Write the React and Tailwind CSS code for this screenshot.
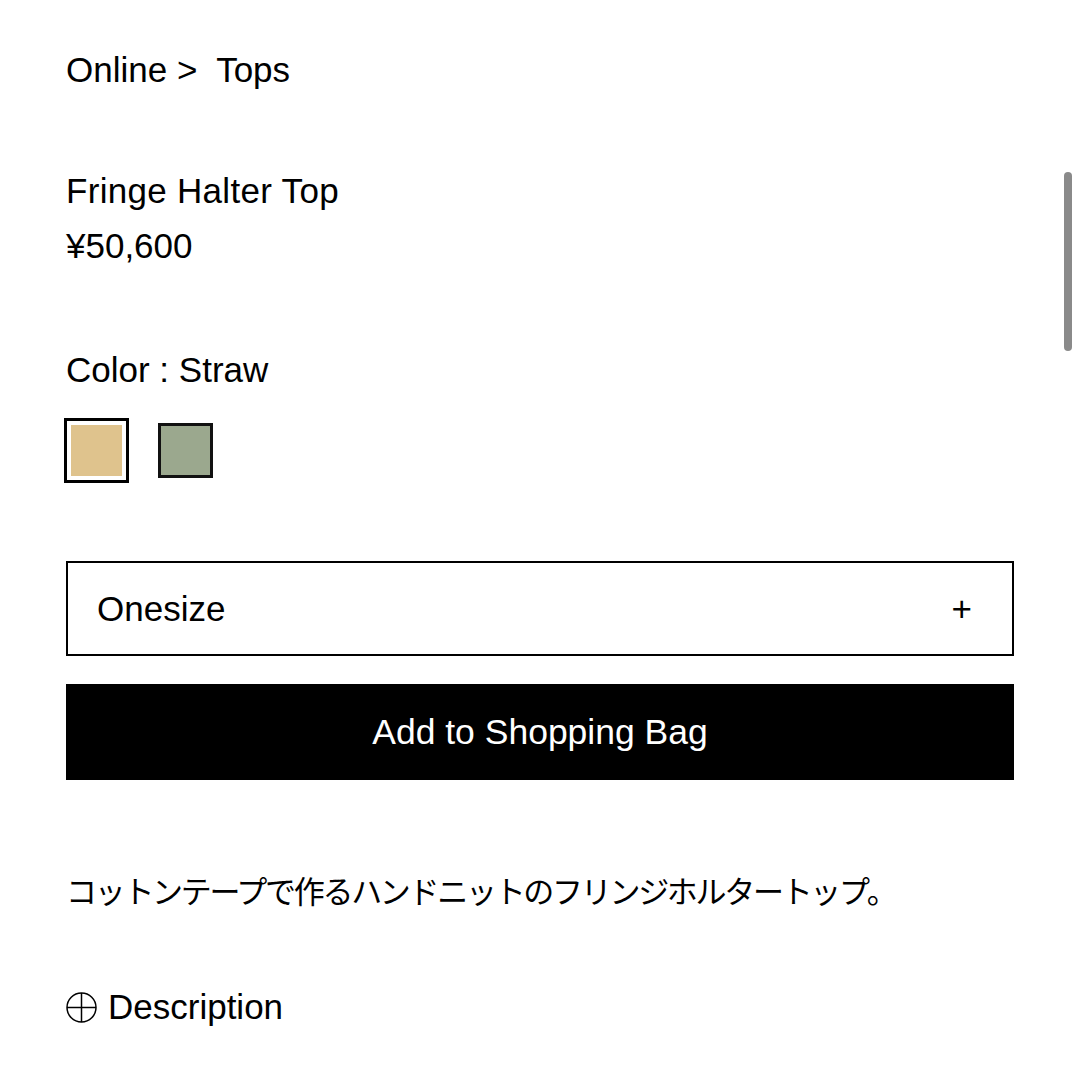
export default function App() {
    const font = { fontFamily: '"Liberation Sans", Arial, "Noto Sans CJK JP", sans-serif' };
    return (
        <div className="relative w-[1080px] h-[1080px] overflow-hidden bg-white text-black" style={font}>
            <div className="px-[66px] pt-[50px]">
                <div className="text-[35px] leading-[40px]">Online &gt;&nbsp; Tops</div>

                <div className="mt-[81px] text-[35px] leading-[40px] tracking-[0.3px]">Fringe Halter Top</div>
                <div className="mt-[15px] text-[35px] leading-[40px]">¥50,600</div>

                <div className="mt-[84px] text-[35px] leading-[40px]">Color : Straw</div>

                <div className="mt-[28px] -ml-[2px] flex items-center gap-[29px] h-[65px]">
                    <div className="w-[65px] h-[65px] border-[3px] border-black p-[4px] bg-white">
                        <div className="w-full h-full bg-[#dfc38d]" />
                    </div>
                    <div className="w-[55px] h-[55px] border-[3px] border-[#111] bg-[#9ba88e]" />
                </div>

                <div className="mt-[78px] h-[95px] border-2 border-black flex items-center justify-between pl-[29px] pr-[40px]">
                    <span className="text-[35px] leading-[40px]">Onesize</span>
                    <span className="text-[35px] leading-[40px]">+</span>
                </div>

                <button className="mt-[28px] w-full h-[96px] bg-black text-white text-[35.5px] leading-[40px] flex items-center justify-center">
                    Add to Shopping Bag
                </button>

                <div
                    className="mt-[90px] text-[31px] leading-[40px] tracking-[-2.3px]"
                    style={{ fontFamily: '"Noto Sans CJK JP", sans-serif' }}
                >
                    コットンテープで作るハンドニットのフリンジホルタートップ。
                </div>

                <div className="mt-[77px] flex items-center gap-[11px]">
                    <svg width="31" height="31" viewBox="0 0 31 31" fill="none" stroke="#000" strokeWidth="1.5">
                        <circle cx="15.5" cy="15.5" r="14.5" />
                        <line x1="15.5" y1="1" x2="15.5" y2="30" />
                        <line x1="1" y1="15.5" x2="30" y2="15.5" />
                    </svg>
                    <span className="text-[35px] leading-[40px]">Description</span>
                </div>
            </div>

            <div className="absolute right-[8px] top-[172px] w-[8px] h-[179px] rounded-full bg-[#8a8a8a]" />
        </div>
    );
}
